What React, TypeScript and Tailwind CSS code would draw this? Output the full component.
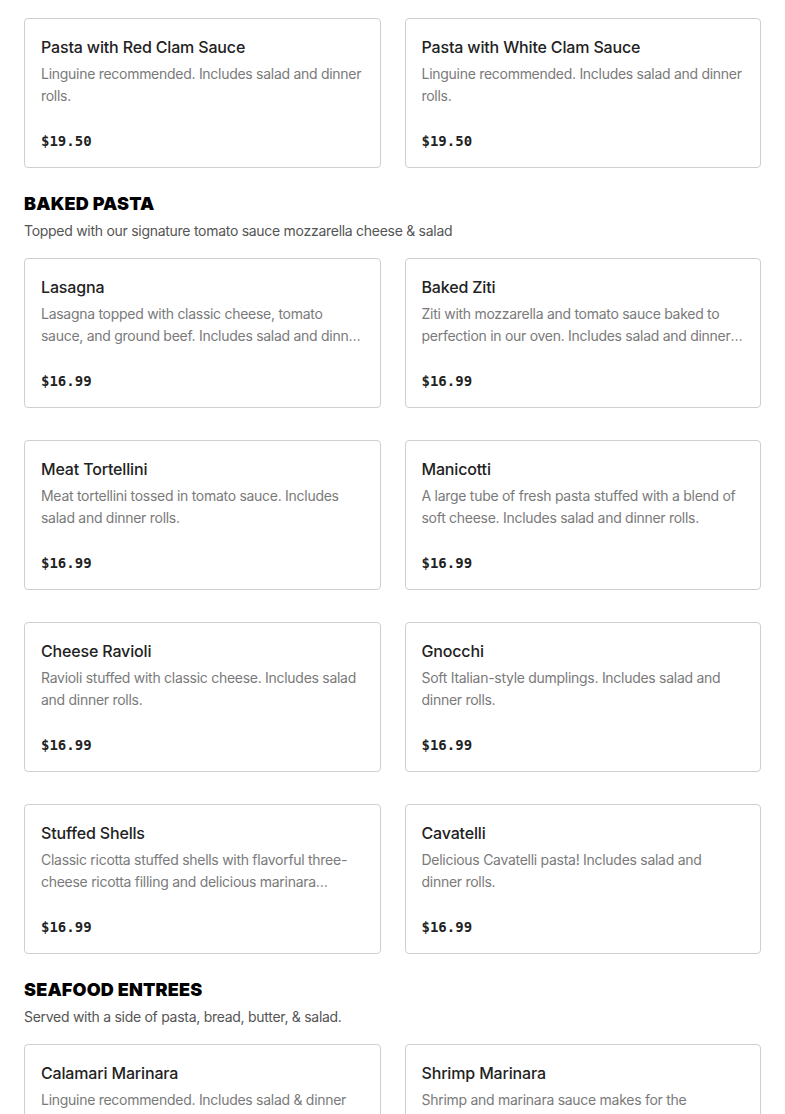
import React from 'react';

type Item = { name: string; description: string; price: string };

const topRow: Item[] = [
  { name: 'Pasta with Red Clam Sauce', description: 'Linguine recommended. Includes salad and dinner rolls.', price: '$19.50' },
  { name: 'Pasta with White Clam Sauce', description: 'Linguine recommended. Includes salad and dinner rolls.', price: '$19.50' },
];

const bakedPasta: Item[] = [
  { name: 'Lasagna', description: 'Lasagna topped with classic cheese, tomato sauce, and ground beef. Includes salad and dinner rolls.', price: '$16.99' },
  { name: 'Baked Ziti', description: 'Ziti with mozzarella and tomato sauce baked to perfection in our oven. Includes salad and dinner rolls.', price: '$16.99' },
  { name: 'Meat Tortellini', description: 'Meat tortellini tossed in tomato sauce. Includes salad and dinner rolls.', price: '$16.99' },
  { name: 'Manicotti', description: 'A large tube of fresh pasta stuffed with a blend of soft cheese. Includes salad and dinner rolls.', price: '$16.99' },
  { name: 'Cheese Ravioli', description: 'Ravioli stuffed with classic cheese. Includes salad and dinner rolls.', price: '$16.99' },
  { name: 'Gnocchi', description: 'Soft Italian-style dumplings. Includes salad and dinner rolls.', price: '$16.99' },
  { name: 'Stuffed Shells', description: 'Classic ricotta stuffed shells with flavorful three-cheese ricotta filling and delicious marinara topping. Includes salad and dinner rolls.', price: '$16.99' },
  { name: 'Cavatelli', description: 'Delicious Cavatelli pasta! Includes salad and dinner rolls.', price: '$16.99' },
];

const seafood: Item[] = [
  { name: 'Calamari Marinara', description: 'Linguine recommended. Includes salad & dinner rolls.', price: '$21.99' },
  { name: 'Shrimp Marinara', description: 'Shrimp and marinara sauce makes for the delicious seafood pasta. Includes salad & dinner rolls.', price: '$21.99' },
];

function MenuCard({ item }: { item: Item }) {
  return (
    <div className="border border-[#cfcfcf] rounded-[4px] bg-white p-4 h-[150px] flex flex-col">
      <h3 className="text-[16px] leading-6 font-medium tracking-[-0.01em] text-[#222]">{item.name}</h3>
      <p className="mt-1 text-[14px] leading-[22px] tracking-[-0.02em] text-[#7a7a7a] line-clamp-2">
        {item.description}
      </p>
      <div className="mt-auto text-[14px] leading-5 font-bold text-[#222] font-['DejaVu_Sans_Mono',monospace]">
        {item.price}
      </div>
    </div>
  );
}

function Section({ title, subtitle, items }: { title: string; subtitle: string; items: Item[] }) {
  return (
    <section className="mt-6">
      <h2 className="text-[18px] leading-6 font-black tracking-[0.01em] text-black uppercase">{title}</h2>
      <p className="mt-[5px] text-[14px] leading-5 tracking-[-0.02em] text-[#555]">{subtitle}</p>
      <div className="mt-[17px] grid grid-cols-2 gap-x-6 gap-y-8">
        {items.map((item) => (
          <MenuCard key={item.name} item={item} />
        ))}
      </div>
    </section>
  );
}

export default function App() {
  return (
    <div className="bg-white min-h-screen px-6 pt-[18px] pb-10 font-['Inter',sans-serif]">
      <div className="grid grid-cols-2 gap-x-6">
        {topRow.map((item) => (
          <MenuCard key={item.name} item={item} />
        ))}
      </div>
      <Section
        title="Baked Pasta"
        subtitle="Topped with our signature tomato sauce mozzarella cheese & salad"
        items={bakedPasta}
      />
      <Section
        title="Seafood Entrees"
        subtitle="Served with a side of pasta, bread, butter, & salad."
        items={seafood}
      />
    </div>
  );
}
